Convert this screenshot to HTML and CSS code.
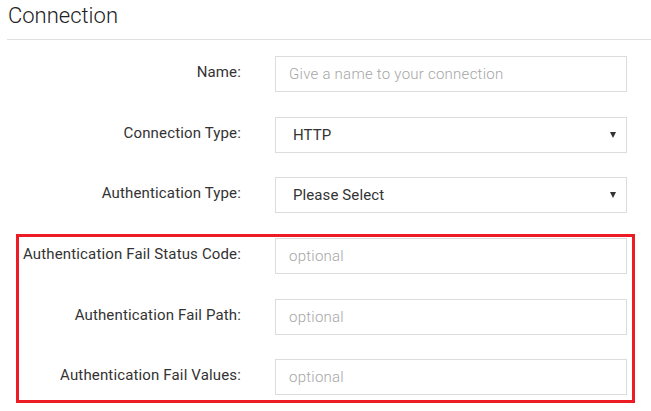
FILE: index.html
```html
<!DOCTYPE html>
<html>
<head>
<meta charset="utf-8">
<link rel="stylesheet" href="styles.css">
</head>
<body>
<div class="page">
  <h1 class="title">Connection</h1>
  <form class="form">
    <div class="row">
      <label class="label">Name:</label>
      <input class="field" type="text" placeholder="Give a name to your connection">
    </div>
    <div class="row">
      <label class="label">Connection Type:</label>
      <div class="select"><span class="select-text">HTTP</span><span class="caret"></span></div>
    </div>
    <div class="row">
      <label class="label">Authentication Type:</label>
      <div class="select"><span class="select-text">Please Select</span><span class="caret"></span></div>
    </div>
    <div class="highlight">
      <div class="row">
        <label class="label inner">Authentication Fail Status Code:</label>
        <input class="field" type="text" placeholder="optional">
      </div>
      <div class="row">
        <label class="label inner">Authentication Fail Path:</label>
        <input class="field" type="text" placeholder="optional">
      </div>
      <div class="row">
        <label class="label inner">Authentication Fail Values:</label>
        <input class="field" type="text" placeholder="optional">
      </div>
    </div>
  </form>
</div>
</body>
</html>
```
FILE: styles.css
```css
* { box-sizing: border-box; }
html, body { margin: 0; padding: 0; background: #fff; }
body {
  font-family: Roboto, "Liberation Sans", Arial, sans-serif;
  color: #333;
  font-size: 15px;
}
.title {
  margin: 0 0 0 7px;
  padding: 2px 0 0 1px;
  height: 40px;
  font-size: 22px;
  font-weight: 300;
  line-height: 28px;
  color: #222;
  border-bottom: 1px solid #e0e0e0;
}
.form {
  display: flex;
  flex-direction: column;
  gap: 24.6px;
  padding-top: 16px;
}
.row {
  display: flex;
  align-items: flex-start;
  height: 36px;
}
.label {
  width: 241px;
  flex: none;
  text-align: right;
  padding-top: 6px;
  line-height: 20px;
  font-size: 15px;
  letter-spacing: 0.15px;
  color: #333;
}
.label.inner { width: 222px; }
.field, .select {
  margin-left: 34px;
  width: 352px;
  height: 36px;
  border: 1px solid #dcdcdc;
  background: #fff;
  font-family: Roboto, "Liberation Sans", Arial, sans-serif;
  font-size: 15px;
  color: #333;
  padding: 0 13px;
  outline: none;
  border-radius: 0;
}
.field::placeholder { color: #a6a6a6; font-weight: 300; letter-spacing: 0.25px; }
.select {
  display: flex;
  align-items: center;
  justify-content: space-between;
  padding: 0 10px 0 17px;
}
.select-text { line-height: 20px; letter-spacing: 0.1px; }
.caret {
  width: 0; height: 0;
  border-left: 3.5px solid transparent;
  border-right: 3.5px solid transparent;
  border-top: 6px solid #333;
}
.highlight {
  margin: -3.6px 16px 0 16px;
  border: 3px solid #ed1c24;
  padding: 1px 5px 5px 0;
  display: flex;
  flex-direction: column;
  gap: 24.6px;
}
```
